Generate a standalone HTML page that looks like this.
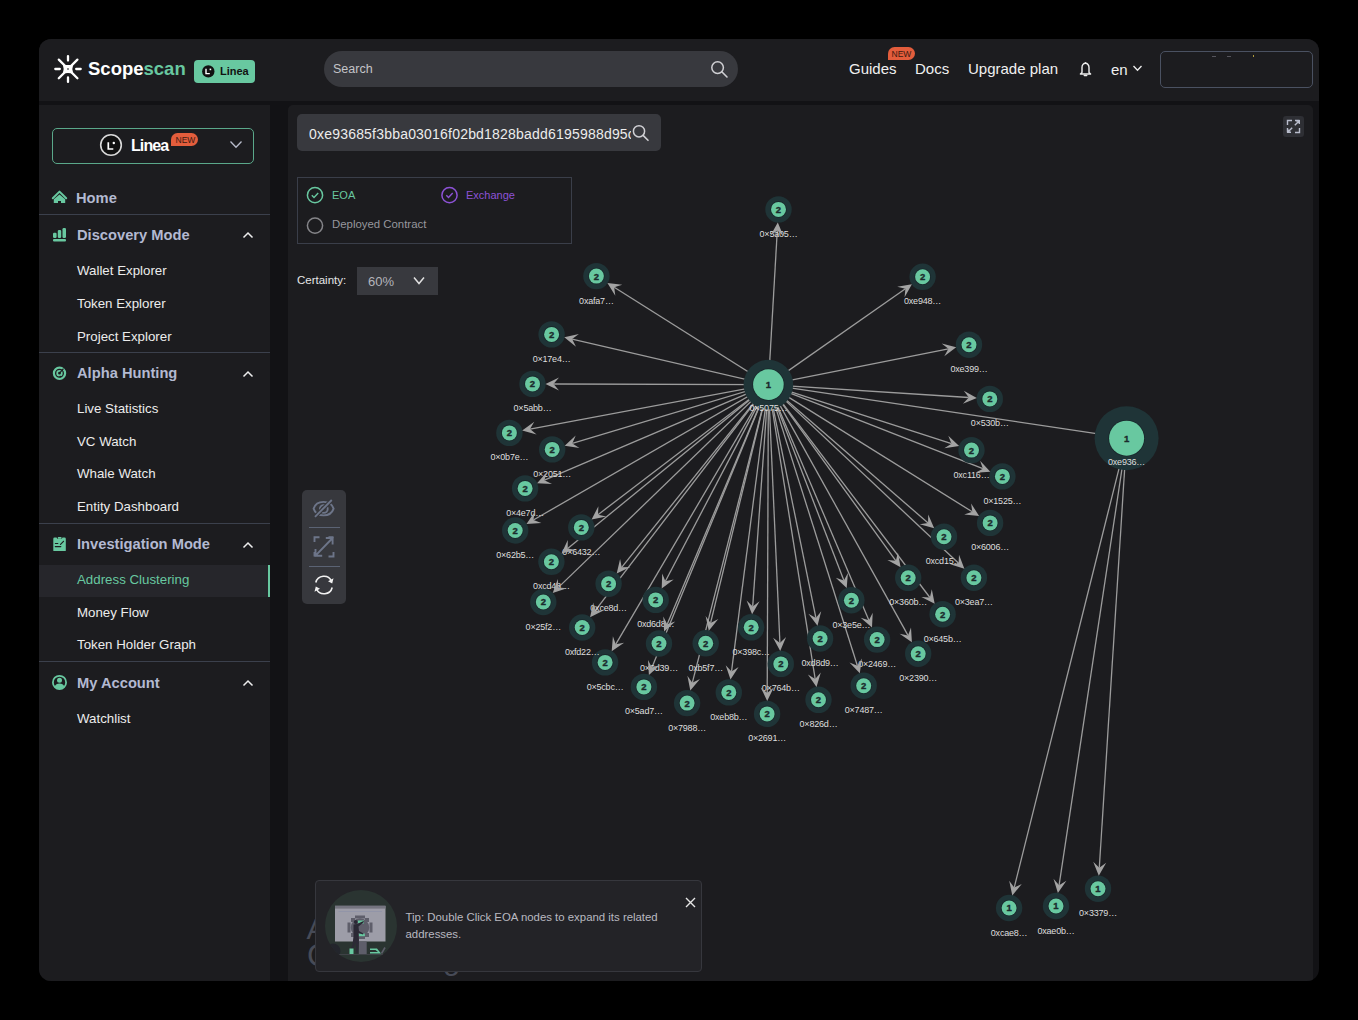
<!DOCTYPE html>
<html><head><meta charset="utf-8">
<style>
*{margin:0;padding:0;box-sizing:border-box}
html,body{width:1358px;height:1020px;overflow:hidden;background:#000;font-family:"Liberation Sans",sans-serif}
.a{position:absolute}
#win{position:absolute;left:39px;top:39px;width:1280px;height:942px;background:#121215;border-radius:12px;overflow:hidden}
#hdr{position:absolute;left:0;top:0;width:1280px;height:62px;background:#1c1c1f}
#side{position:absolute;left:0;top:66px;width:231px;height:876px;background:#1c1c1f}
#main{position:absolute;left:249px;top:66px;width:1025px;height:876px;background:#1c1c1f;border-radius:5px 5px 0 0}
.t{position:absolute;white-space:nowrap;line-height:1}
.sec{color:#b3b9d1;font-weight:bold;font-size:14.7px}
.item{color:#ececec;font-size:13.3px}
.div{position:absolute;left:0;width:231px;height:1px;background:#3b404c}
.chev{position:absolute}
</style></head><body>
<div id="win">
 <div id="hdr"></div>
 <div id="side"></div>
 <div id="main"></div>
</div>

<!-- HEADER (page coords) -->
<svg class="a" style="left:52px;top:53px" width="32" height="32" viewBox="-16 -16 32 32">
 <g stroke="#fff" stroke-width="2.3" stroke-linecap="round" fill="none">
  <path d="M-9.2,-9.4 L9.4,9.2 M9.4,-9.4 L-9.2,9.2"/>
  <path d="M0,-12.9 V-8.4 M0,8.4 V12.9 M-12.7,0 H-8.2 M8.2,0 H12.7"/>
 </g>
 <path d="M-5.2,-4.6 Q0,-3.2 5.2,-4.6 Q3.4,0 5.2,4.6 Q0,3.2 -5.2,4.6 Q-3.4,0 -5.2,-4.6 Z" fill="#fff"/>
 <rect x="-0.7" y="-0.7" width="1.4" height="1.4" fill="#1c1c1f"/>
</svg>
<div class="t" style="left:88px;top:59.5px;font-size:18.5px;font-weight:bold;color:#fff;letter-spacing:0px">Scope<span style="color:#68c8a0">scan</span></div>
<div class="a" style="left:194px;top:60px;width:61px;height:23px;background:#68c8a0;border-radius:4px"></div>
<svg class="a" style="left:201px;top:64px" width="15" height="15" viewBox="0 0 15 15"><circle cx="7.3" cy="7.4" r="6.2" fill="#111"/><path d="M5,4.8 V9.6 H8.8" stroke="#fff" stroke-width="1.4" fill="none"/><rect x="8.6" y="4.6" width="1.6" height="1.6" fill="#fff"/></svg>
<div class="t" style="left:220px;top:65.7px;font-size:11px;font-weight:bold;color:#111">Linea</div>

<div class="a" style="left:324px;top:51px;width:414px;height:36px;background:#38393e;border-radius:18px"></div>
<div class="t" style="left:333px;top:62.5px;font-size:12.5px;color:#c4c4c8">Search</div>
<svg class="a" style="left:709px;top:59px" width="20" height="20" viewBox="0 0 20 20"><circle cx="8.6" cy="8.6" r="5.8" stroke="#d0d0d4" stroke-width="1.5" fill="none"/><path d="M12.8,12.8 L18,18" stroke="#d0d0d4" stroke-width="1.6" stroke-linecap="round"/></svg>

<div class="t" style="left:849px;top:61px;font-size:15px;color:#f0f0f0">Guides</div>
<div class="a" style="left:888px;top:47px;width:27px;height:13px;background:#e35d3c;border-radius:7px 7px 7px 0"></div>
<div class="t" style="left:891.5px;top:49.5px;font-size:8.5px;color:#3b1a10">NEW</div>
<div class="t" style="left:915px;top:61px;font-size:15px;color:#f0f0f0">Docs</div>
<div class="t" style="left:968px;top:61px;font-size:15px;color:#f0f0f0">Upgrade plan</div>
<svg class="a" style="left:1078px;top:61px" width="15" height="17" viewBox="0 0 15 17"><path d="M4,11.5 V6.5 A3.5,4.2 0 0 1 11,6.5 V11.5 L12.6,13 H2.4 Z" stroke="#eee" stroke-width="1.4" fill="none" stroke-linejoin="round"/><path d="M6.3,14.6 H8.7" stroke="#eee" stroke-width="1.5" stroke-linecap="round"/><path d="M7.5,1.2 V2.4" stroke="#eee" stroke-width="1.3"/></svg>
<div class="t" style="left:1111px;top:62px;font-size:15px;color:#f0f0f0">en</div>
<svg class="a" style="left:1132px;top:64px" width="11" height="9" viewBox="0 0 11 9"><path d="M1.5,2 L5.5,6.3 L9.5,2" stroke="#eee" stroke-width="1.3" fill="none"/></svg>
<div class="a" style="left:1160px;top:51px;width:153px;height:37px;border:1px solid #4a5161;border-radius:5px"></div><div class="a" style="left:1212px;top:56px;width:4px;height:1px;background:#55555c"></div><div class="a" style="left:1227px;top:56px;width:4px;height:1px;background:#55555c"></div><div class="a" style="left:1253px;top:55px;width:1px;height:2px;background:#b09a3a"></div>

<!-- SIDEBAR -->
<div class="a" style="left:52px;top:128px;width:202px;height:36px;border:1.3px solid #5aa88a;border-radius:5px"></div>
<svg class="a" style="left:99px;top:133px" width="24" height="24" viewBox="0 0 24 24"><circle cx="12" cy="12" r="10.3" fill="#111" stroke="#d9d9d9" stroke-width="1.6"/><path d="M9.3,9.3 V16 H14.3" stroke="#fff" stroke-width="1.7" fill="none"/><circle cx="14.8" cy="10" r="1.2" fill="#fff"/></svg>
<div class="t" style="left:131px;top:138px;font-size:16px;font-weight:bold;color:#fff;letter-spacing:-0.9px">Linea</div>
<div class="a" style="left:171px;top:133px;width:27px;height:13px;background:#e35d3c;border-radius:7px 7px 7px 0"></div>
<div class="t" style="left:175.5px;top:135.5px;font-size:8.5px;color:#3b1a10">NEW</div>
<svg class="a" style="left:229px;top:139px" width="14" height="12" viewBox="0 0 14 12"><path d="M1.5,2.5 L7,8.3 L12.5,2.5" stroke="#b8bccb" stroke-width="1.3" fill="none"/></svg>

<svg class="a" style="left:51px;top:189px" width="17" height="17" viewBox="0 0 17 17"><path d="M1.8,9.2 L8.5,2.6 L15.2,9.2" stroke="#68c8a0" stroke-width="2" fill="none" stroke-linejoin="round" stroke-linecap="round"/><path d="M2.8,14 V10.2 L8.5,5.6 L14.2,10.2 V14 H10 V12 H7 V14 Z" fill="#68c8a0"/></svg>
<div class="t sec" style="left:76px;top:191px">Home</div>
<div class="div" style="left:39px;top:214px"></div>

<svg class="a" style="left:51px;top:226px" width="17" height="17" viewBox="0 0 17 17"><rect x="2" y="6.8" width="3.6" height="5.2" rx="1.2" fill="#68c8a0"/><rect x="6.8" y="3.9" width="3.4" height="8.1" rx="1.2" fill="#68c8a0"/><rect x="11.5" y="2" width="3.5" height="10" rx="1.2" fill="#68c8a0"/><rect x="2" y="13" width="13" height="2.4" rx="1" fill="#68c8a0"/></svg>
<div class="t sec" style="left:77px;top:227.5px">Discovery Mode</div>
<svg class="chev" style="left:242px;top:230px" width="12" height="10" viewBox="0 0 12 10"><path d="M1.5,7.5 L6,3 L10.5,7.5" stroke="#eee" stroke-width="1.5" fill="none"/></svg>
<div class="t item" style="left:77px;top:264px">Wallet Explorer</div>
<div class="t item" style="left:77px;top:297px">Token Explorer</div>
<div class="t item" style="left:77px;top:329.5px">Project Explorer</div>
<div class="div" style="left:39px;top:352px"></div>

<svg class="a" style="left:51px;top:365px" width="17" height="17" viewBox="0 0 17 17"><circle cx="8.5" cy="8.2" r="5.6" stroke="#68c8a0" stroke-width="2.2" fill="none"/><circle cx="8.5" cy="8.2" r="2.3" stroke="#68c8a0" stroke-width="1.8" fill="none"/><path d="M8.3,8.3 L12.5,3.6" stroke="#1c1c1f" stroke-width="1.2"/><circle cx="9.2" cy="11.6" r="0.9" fill="#1c1c1f"/></svg>
<div class="t sec" style="left:77px;top:366px">Alpha Hunting</div>
<svg class="chev" style="left:242px;top:369px" width="12" height="10" viewBox="0 0 12 10"><path d="M1.5,7.5 L6,3 L10.5,7.5" stroke="#eee" stroke-width="1.5" fill="none"/></svg>
<div class="t item" style="left:77px;top:402px">Live Statistics</div>
<div class="t item" style="left:77px;top:434.5px">VC Watch</div>
<div class="t item" style="left:77px;top:467px">Whale Watch</div>
<div class="t item" style="left:77px;top:499.5px">Entity Dashboard</div>
<div class="div" style="left:39px;top:523px"></div>

<svg class="a" style="left:51px;top:535px" width="17" height="17" viewBox="0 0 17 17"><path d="M2.3,3.8 Q2.3,2.5 3.6,2.5 H5.6 L6.3,3.8 H10.8 L11.5,2.5 H13.5 Q14.8,2.5 14.8,3.8 V15.5 Q14.8,16 14.3,16 H2.8 Q2.3,16 2.3,15.5 Z" fill="#68c8a0"/><rect x="6.8" y="1.9" width="3.7" height="1.8" rx="0.5" fill="#68c8a0"/><path d="M4.4,8.5 H6.8 M4.3,11.6 H9.8" stroke="#1c1c1f" stroke-width="1.2" stroke-linecap="round"/><path d="M9.5,9.4 L12.5,6.3" stroke="#1c1c1f" stroke-width="1.2" stroke-linecap="round"/></svg>
<div class="t sec" style="left:77px;top:537px">Investigation Mode</div>
<svg class="chev" style="left:242px;top:540px" width="12" height="10" viewBox="0 0 12 10"><path d="M1.5,7.5 L6,3 L10.5,7.5" stroke="#eee" stroke-width="1.5" fill="none"/></svg>
<div class="a" style="left:39px;top:565px;width:231px;height:32px;background:#26262b"></div>
<div class="a" style="left:268px;top:565px;width:2px;height:32px;background:#68c8a0"></div>
<div class="t item" style="left:77px;top:573px;color:#68c8a0">Address Clustering</div>
<div class="t item" style="left:77px;top:605.5px">Money Flow</div>
<div class="t item" style="left:77px;top:638px">Token Holder Graph</div>
<div class="div" style="left:39px;top:661px"></div>

<svg class="a" style="left:51px;top:674px" width="17" height="17" viewBox="0 0 17 17"><circle cx="8.5" cy="8.4" r="6.6" stroke="#68c8a0" stroke-width="1.8" fill="none"/><circle cx="8.5" cy="6.3" r="2.5" fill="#68c8a0"/><path d="M3.6,12.6 Q5,9.5 8.5,9.5 Q12,9.5 13.4,12.6 Q11.5,15 8.5,15 Q5.5,15 3.6,12.6 Z" fill="#68c8a0"/></svg>
<div class="t sec" style="left:77px;top:676px">My Account</div>
<svg class="chev" style="left:242px;top:678px" width="12" height="10" viewBox="0 0 12 10"><path d="M1.5,7.5 L6,3 L10.5,7.5" stroke="#eee" stroke-width="1.5" fill="none"/></svg>
<div class="t item" style="left:77px;top:712px">Watchlist</div>


<!-- MAIN -->
<div class="a" style="left:297px;top:114px;width:364px;height:37px;background:#38393e;border-radius:5px"></div>
<div class="t" style="left:309px;top:126.5px;font-size:14px;color:#ececec;width:322px;overflow:hidden;letter-spacing:0.2px">0xe93685f3bba03016f02bd1828badd6195988d95c0</div>
<svg class="a" style="left:631px;top:123px" width="20" height="20" viewBox="0 0 20 20"><circle cx="8" cy="8.3" r="5.6" stroke="#d0d0d4" stroke-width="1.5" fill="none"/><path d="M12.1,12.4 L17,17.3" stroke="#d0d0d4" stroke-width="1.6" stroke-linecap="round"/></svg>
<div class="a" style="left:297px;top:177px;width:275px;height:67px;border:1px solid #3a3e49"></div>
<svg class="a" style="left:305px;top:185px" width="20" height="20" viewBox="0 0 20 20"><circle cx="10" cy="10.2" r="7.6" stroke="#68c8a0" stroke-width="1.5" fill="none"/><path d="M6.8,10.3 L9,12.5 L13.2,8" stroke="#68c8a0" stroke-width="1.4" fill="none"/></svg>
<div class="t" style="left:332px;top:189.5px;font-size:11px;color:#68c8a0">EOA</div>
<svg class="a" style="left:440px;top:185px" width="20" height="20" viewBox="0 0 20 20"><circle cx="9.5" cy="10.2" r="7.6" stroke="#8d52d6" stroke-width="1.5" fill="none"/><path d="M6.3,10.3 L8.5,12.5 L12.7,8" stroke="#8d52d6" stroke-width="1.4" fill="none"/></svg>
<div class="t" style="left:466px;top:189.5px;font-size:11px;color:#8d52d6">Exchange</div>
<svg class="a" style="left:305px;top:215px" width="20" height="20" viewBox="0 0 20 20"><circle cx="10" cy="10.6" r="7.6" stroke="#858589" stroke-width="1.5" fill="none"/></svg>
<div class="t" style="left:332px;top:219.3px;font-size:11.4px;color:#97979d">Deployed Contract</div>
<div class="t" style="left:297px;top:274.5px;font-size:11.5px;color:#e6e6e6">Certainty:</div>
<div class="a" style="left:357px;top:267px;width:81px;height:28px;background:#38393e"></div>
<div class="t" style="left:368px;top:275px;font-size:13px;color:#b4b4bb">60%</div>
<svg class="a" style="left:412px;top:275px" width="14" height="12" viewBox="0 0 14 12"><path d="M2,2.5 L7,8.5 L12,2.5" stroke="#e0e0e0" stroke-width="1.5" fill="none"/></svg>
<div class="a" style="left:1283px;top:116px;width:21px;height:21px;background:#2e2f34;border-radius:3px"></div>
<svg class="a" style="left:1283px;top:116px" width="21" height="21" viewBox="0 0 21 21"><g stroke="#b8bccb" stroke-width="1.4" fill="none"><path d="M4.5,9 V4.5 H9 M16.5,12 V16.5 H12 M4.5,12 V16.5 M12,4.5 H16.5"/><path d="M11.8,9.2 L16.3,4.7 M13,4.7 H16.3 V8 M9.2,11.8 L4.7,16.3 M4.7,13 V16.3 H8"/></g></svg>
<!--GRAPH--><svg class="a" style="left:0;top:0" width="1358" height="1020" viewBox="0 0 1358 1020"><g stroke="#9c9c9c" stroke-width="1.3"><line x1="768.4" y1="384.6" x2="777.3" y2="230.4"/><line x1="768.4" y1="384.6" x2="614.2" y2="287.3"/><line x1="768.4" y1="384.6" x2="905.4" y2="288.8"/><line x1="768.4" y1="384.6" x2="572.1" y2="339.1"/><line x1="768.4" y1="384.6" x2="948.4" y2="348.8"/><line x1="768.4" y1="384.6" x2="553.5" y2="384.0"/><line x1="768.4" y1="384.6" x2="968.8" y2="397.5"/><line x1="768.4" y1="384.6" x2="530.0" y2="429.1"/><line x1="768.4" y1="384.6" x2="572.3" y2="443.4"/><line x1="768.4" y1="384.6" x2="951.5" y2="443.7"/><line x1="768.4" y1="384.6" x2="982.9" y2="468.7"/><line x1="768.4" y1="384.6" x2="544.4" y2="480.2"/><line x1="768.4" y1="384.6" x2="533.4" y2="520.0"/><line x1="768.4" y1="384.6" x2="598.0" y2="514.7"/><line x1="768.4" y1="384.6" x2="972.3" y2="511.8"/><line x1="768.4" y1="384.6" x2="928.1" y2="523.0"/><line x1="768.4" y1="384.6" x2="567.7" y2="548.5"/><line x1="768.4" y1="384.6" x2="621.7" y2="567.3"/><line x1="768.4" y1="384.6" x2="895.9" y2="560.8"/><line x1="768.4" y1="384.6" x2="958.6" y2="563.3"/><line x1="768.4" y1="384.6" x2="558.4" y2="587.4"/><line x1="768.4" y1="384.6" x2="665.4" y2="581.3"/><line x1="768.4" y1="384.6" x2="843.9" y2="580.6"/><line x1="768.4" y1="384.6" x2="929.9" y2="597.5"/><line x1="768.4" y1="384.6" x2="595.0" y2="610.8"/><line x1="768.4" y1="384.6" x2="752.7" y2="606.4"/><line x1="768.4" y1="384.6" x2="667.2" y2="624.2"/><line x1="768.4" y1="384.6" x2="710.6" y2="622.9"/><line x1="768.4" y1="384.6" x2="815.9" y2="617.9"/><line x1="768.4" y1="384.6" x2="868.9" y2="620.3"/><line x1="768.4" y1="384.6" x2="908.0" y2="635.4"/><line x1="768.4" y1="384.6" x2="615.7" y2="644.3"/><line x1="768.4" y1="384.6" x2="779.9" y2="642.9"/><line x1="768.4" y1="384.6" x2="651.9" y2="667.5"/><line x1="768.4" y1="384.6" x2="857.4" y2="665.7"/><line x1="768.4" y1="384.6" x2="731.5" y2="671.6"/><line x1="768.4" y1="384.6" x2="692.3" y2="682.8"/><line x1="768.4" y1="384.6" x2="815.2" y2="679.1"/><line x1="768.4" y1="384.6" x2="767.2" y2="692.9"/><line x1="1126.6" y1="438.2" x2="1014.2" y2="887.6"/><line x1="1126.6" y1="438.2" x2="1059.1" y2="885.2"/><line x1="1126.6" y1="438.2" x2="1099.3" y2="867.7"/><line x1="768.4" y1="384.6" x2="1126.6" y2="438.2"/></g><g><circle cx="768.4" cy="384.6" r="24.8" fill="#1f3437"/><circle cx="768.4" cy="384.6" r="16.1" fill="#18282b"/><circle cx="768.4" cy="384.6" r="15.3" fill="#68c8a0"/><text x="768.4" y="388.0" font-size="9.5" font-weight="bold" fill="#1b2b2d" stroke="#1b2b2d" stroke-width="0.35" text-anchor="middle">1</text><circle cx="1126.6" cy="438.2" r="32" fill="#1f3437"/><circle cx="1126.6" cy="438.2" r="18.3" fill="#18282b"/><circle cx="1126.6" cy="438.2" r="17.5" fill="#68c8a0"/><text x="1126.6" y="441.6" font-size="9.5" font-weight="bold" fill="#1b2b2d" stroke="#1b2b2d" stroke-width="0.35" text-anchor="middle">1</text><circle cx="778.5" cy="209.4" r="13.2" fill="#1f3437"/><circle cx="778.5" cy="209.4" r="8.3" fill="#18282b"/><circle cx="778.5" cy="209.4" r="7.5" fill="#68c8a0"/><text x="778.5" y="212.8" font-size="9.5" font-weight="bold" fill="#1b2b2d" stroke="#1b2b2d" stroke-width="0.35" text-anchor="middle">2</text><circle cx="596.4" cy="276.1" r="13.2" fill="#1f3437"/><circle cx="596.4" cy="276.1" r="8.3" fill="#18282b"/><circle cx="596.4" cy="276.1" r="7.5" fill="#68c8a0"/><text x="596.4" y="279.5" font-size="9.5" font-weight="bold" fill="#1b2b2d" stroke="#1b2b2d" stroke-width="0.35" text-anchor="middle">2</text><circle cx="922.6" cy="276.8" r="13.2" fill="#1f3437"/><circle cx="922.6" cy="276.8" r="8.3" fill="#18282b"/><circle cx="922.6" cy="276.8" r="7.5" fill="#68c8a0"/><text x="922.6" y="280.2" font-size="9.5" font-weight="bold" fill="#1b2b2d" stroke="#1b2b2d" stroke-width="0.35" text-anchor="middle">2</text><circle cx="551.6" cy="334.4" r="13.2" fill="#1f3437"/><circle cx="551.6" cy="334.4" r="8.3" fill="#18282b"/><circle cx="551.6" cy="334.4" r="7.5" fill="#68c8a0"/><text x="551.6" y="337.8" font-size="9.5" font-weight="bold" fill="#1b2b2d" stroke="#1b2b2d" stroke-width="0.35" text-anchor="middle">2</text><circle cx="969" cy="344.7" r="13.2" fill="#1f3437"/><circle cx="969" cy="344.7" r="8.3" fill="#18282b"/><circle cx="969" cy="344.7" r="7.5" fill="#68c8a0"/><text x="969" y="348.1" font-size="9.5" font-weight="bold" fill="#1b2b2d" stroke="#1b2b2d" stroke-width="0.35" text-anchor="middle">2</text><circle cx="532.5" cy="383.9" r="13.2" fill="#1f3437"/><circle cx="532.5" cy="383.9" r="8.3" fill="#18282b"/><circle cx="532.5" cy="383.9" r="7.5" fill="#68c8a0"/><text x="532.5" y="387.3" font-size="9.5" font-weight="bold" fill="#1b2b2d" stroke="#1b2b2d" stroke-width="0.35" text-anchor="middle">2</text><circle cx="989.8" cy="398.9" r="13.2" fill="#1f3437"/><circle cx="989.8" cy="398.9" r="8.3" fill="#18282b"/><circle cx="989.8" cy="398.9" r="7.5" fill="#68c8a0"/><text x="989.8" y="402.3" font-size="9.5" font-weight="bold" fill="#1b2b2d" stroke="#1b2b2d" stroke-width="0.35" text-anchor="middle">2</text><circle cx="509.4" cy="432.9" r="13.2" fill="#1f3437"/><circle cx="509.4" cy="432.9" r="8.3" fill="#18282b"/><circle cx="509.4" cy="432.9" r="7.5" fill="#68c8a0"/><text x="509.4" y="436.3" font-size="9.5" font-weight="bold" fill="#1b2b2d" stroke="#1b2b2d" stroke-width="0.35" text-anchor="middle">2</text><circle cx="552.2" cy="449.4" r="13.2" fill="#1f3437"/><circle cx="552.2" cy="449.4" r="8.3" fill="#18282b"/><circle cx="552.2" cy="449.4" r="7.5" fill="#68c8a0"/><text x="552.2" y="452.8" font-size="9.5" font-weight="bold" fill="#1b2b2d" stroke="#1b2b2d" stroke-width="0.35" text-anchor="middle">2</text><circle cx="971.5" cy="450.1" r="13.2" fill="#1f3437"/><circle cx="971.5" cy="450.1" r="8.3" fill="#18282b"/><circle cx="971.5" cy="450.1" r="7.5" fill="#68c8a0"/><text x="971.5" y="453.5" font-size="9.5" font-weight="bold" fill="#1b2b2d" stroke="#1b2b2d" stroke-width="0.35" text-anchor="middle">2</text><circle cx="1002.4" cy="476.4" r="13.2" fill="#1f3437"/><circle cx="1002.4" cy="476.4" r="8.3" fill="#18282b"/><circle cx="1002.4" cy="476.4" r="7.5" fill="#68c8a0"/><text x="1002.4" y="479.8" font-size="9.5" font-weight="bold" fill="#1b2b2d" stroke="#1b2b2d" stroke-width="0.35" text-anchor="middle">2</text><circle cx="525.1" cy="488.4" r="13.2" fill="#1f3437"/><circle cx="525.1" cy="488.4" r="8.3" fill="#18282b"/><circle cx="525.1" cy="488.4" r="7.5" fill="#68c8a0"/><text x="525.1" y="491.8" font-size="9.5" font-weight="bold" fill="#1b2b2d" stroke="#1b2b2d" stroke-width="0.35" text-anchor="middle">2</text><circle cx="515.2" cy="530.5" r="13.2" fill="#1f3437"/><circle cx="515.2" cy="530.5" r="8.3" fill="#18282b"/><circle cx="515.2" cy="530.5" r="7.5" fill="#68c8a0"/><text x="515.2" y="533.9" font-size="9.5" font-weight="bold" fill="#1b2b2d" stroke="#1b2b2d" stroke-width="0.35" text-anchor="middle">2</text><circle cx="581.3" cy="527.4" r="13.2" fill="#1f3437"/><circle cx="581.3" cy="527.4" r="8.3" fill="#18282b"/><circle cx="581.3" cy="527.4" r="7.5" fill="#68c8a0"/><text x="581.3" y="530.8" font-size="9.5" font-weight="bold" fill="#1b2b2d" stroke="#1b2b2d" stroke-width="0.35" text-anchor="middle">2</text><circle cx="990.1" cy="522.9" r="13.2" fill="#1f3437"/><circle cx="990.1" cy="522.9" r="8.3" fill="#18282b"/><circle cx="990.1" cy="522.9" r="7.5" fill="#68c8a0"/><text x="990.1" y="526.3" font-size="9.5" font-weight="bold" fill="#1b2b2d" stroke="#1b2b2d" stroke-width="0.35" text-anchor="middle">2</text><circle cx="944" cy="536.7" r="13.2" fill="#1f3437"/><circle cx="944" cy="536.7" r="8.3" fill="#18282b"/><circle cx="944" cy="536.7" r="7.5" fill="#68c8a0"/><text x="944" y="540.1" font-size="9.5" font-weight="bold" fill="#1b2b2d" stroke="#1b2b2d" stroke-width="0.35" text-anchor="middle">2</text><circle cx="551.4" cy="561.8" r="13.2" fill="#1f3437"/><circle cx="551.4" cy="561.8" r="8.3" fill="#18282b"/><circle cx="551.4" cy="561.8" r="7.5" fill="#68c8a0"/><text x="551.4" y="565.2" font-size="9.5" font-weight="bold" fill="#1b2b2d" stroke="#1b2b2d" stroke-width="0.35" text-anchor="middle">2</text><circle cx="608.6" cy="583.7" r="13.2" fill="#1f3437"/><circle cx="608.6" cy="583.7" r="8.3" fill="#18282b"/><circle cx="608.6" cy="583.7" r="7.5" fill="#68c8a0"/><text x="608.6" y="587.1" font-size="9.5" font-weight="bold" fill="#1b2b2d" stroke="#1b2b2d" stroke-width="0.35" text-anchor="middle">2</text><circle cx="908.2" cy="577.8" r="13.2" fill="#1f3437"/><circle cx="908.2" cy="577.8" r="8.3" fill="#18282b"/><circle cx="908.2" cy="577.8" r="7.5" fill="#68c8a0"/><text x="908.2" y="581.2" font-size="9.5" font-weight="bold" fill="#1b2b2d" stroke="#1b2b2d" stroke-width="0.35" text-anchor="middle">2</text><circle cx="973.9" cy="577.7" r="13.2" fill="#1f3437"/><circle cx="973.9" cy="577.7" r="8.3" fill="#18282b"/><circle cx="973.9" cy="577.7" r="7.5" fill="#68c8a0"/><text x="973.9" y="581.1" font-size="9.5" font-weight="bold" fill="#1b2b2d" stroke="#1b2b2d" stroke-width="0.35" text-anchor="middle">2</text><circle cx="543.3" cy="602" r="13.2" fill="#1f3437"/><circle cx="543.3" cy="602" r="8.3" fill="#18282b"/><circle cx="543.3" cy="602" r="7.5" fill="#68c8a0"/><text x="543.3" y="605.4" font-size="9.5" font-weight="bold" fill="#1b2b2d" stroke="#1b2b2d" stroke-width="0.35" text-anchor="middle">2</text><circle cx="655.7" cy="599.9" r="13.2" fill="#1f3437"/><circle cx="655.7" cy="599.9" r="8.3" fill="#18282b"/><circle cx="655.7" cy="599.9" r="7.5" fill="#68c8a0"/><text x="655.7" y="603.3" font-size="9.5" font-weight="bold" fill="#1b2b2d" stroke="#1b2b2d" stroke-width="0.35" text-anchor="middle">2</text><circle cx="851.4" cy="600.2" r="13.2" fill="#1f3437"/><circle cx="851.4" cy="600.2" r="8.3" fill="#18282b"/><circle cx="851.4" cy="600.2" r="7.5" fill="#68c8a0"/><text x="851.4" y="603.6" font-size="9.5" font-weight="bold" fill="#1b2b2d" stroke="#1b2b2d" stroke-width="0.35" text-anchor="middle">2</text><circle cx="942.6" cy="614.2" r="13.2" fill="#1f3437"/><circle cx="942.6" cy="614.2" r="8.3" fill="#18282b"/><circle cx="942.6" cy="614.2" r="7.5" fill="#68c8a0"/><text x="942.6" y="617.6" font-size="9.5" font-weight="bold" fill="#1b2b2d" stroke="#1b2b2d" stroke-width="0.35" text-anchor="middle">2</text><circle cx="582.2" cy="627.5" r="13.2" fill="#1f3437"/><circle cx="582.2" cy="627.5" r="8.3" fill="#18282b"/><circle cx="582.2" cy="627.5" r="7.5" fill="#68c8a0"/><text x="582.2" y="630.9" font-size="9.5" font-weight="bold" fill="#1b2b2d" stroke="#1b2b2d" stroke-width="0.35" text-anchor="middle">2</text><circle cx="751.2" cy="627.3" r="13.2" fill="#1f3437"/><circle cx="751.2" cy="627.3" r="8.3" fill="#18282b"/><circle cx="751.2" cy="627.3" r="7.5" fill="#68c8a0"/><text x="751.2" y="630.7" font-size="9.5" font-weight="bold" fill="#1b2b2d" stroke="#1b2b2d" stroke-width="0.35" text-anchor="middle">2</text><circle cx="659" cy="643.5" r="13.2" fill="#1f3437"/><circle cx="659" cy="643.5" r="8.3" fill="#18282b"/><circle cx="659" cy="643.5" r="7.5" fill="#68c8a0"/><text x="659" y="646.9" font-size="9.5" font-weight="bold" fill="#1b2b2d" stroke="#1b2b2d" stroke-width="0.35" text-anchor="middle">2</text><circle cx="705.7" cy="643.3" r="13.2" fill="#1f3437"/><circle cx="705.7" cy="643.3" r="8.3" fill="#18282b"/><circle cx="705.7" cy="643.3" r="7.5" fill="#68c8a0"/><text x="705.7" y="646.7" font-size="9.5" font-weight="bold" fill="#1b2b2d" stroke="#1b2b2d" stroke-width="0.35" text-anchor="middle">2</text><circle cx="820.1" cy="638.5" r="13.2" fill="#1f3437"/><circle cx="820.1" cy="638.5" r="8.3" fill="#18282b"/><circle cx="820.1" cy="638.5" r="7.5" fill="#68c8a0"/><text x="820.1" y="641.9" font-size="9.5" font-weight="bold" fill="#1b2b2d" stroke="#1b2b2d" stroke-width="0.35" text-anchor="middle">2</text><circle cx="877.1" cy="639.6" r="13.2" fill="#1f3437"/><circle cx="877.1" cy="639.6" r="8.3" fill="#18282b"/><circle cx="877.1" cy="639.6" r="7.5" fill="#68c8a0"/><text x="877.1" y="643.0" font-size="9.5" font-weight="bold" fill="#1b2b2d" stroke="#1b2b2d" stroke-width="0.35" text-anchor="middle">2</text><circle cx="918.2" cy="653.7" r="13.2" fill="#1f3437"/><circle cx="918.2" cy="653.7" r="8.3" fill="#18282b"/><circle cx="918.2" cy="653.7" r="7.5" fill="#68c8a0"/><text x="918.2" y="657.1" font-size="9.5" font-weight="bold" fill="#1b2b2d" stroke="#1b2b2d" stroke-width="0.35" text-anchor="middle">2</text><circle cx="605.1" cy="662.4" r="13.2" fill="#1f3437"/><circle cx="605.1" cy="662.4" r="8.3" fill="#18282b"/><circle cx="605.1" cy="662.4" r="7.5" fill="#68c8a0"/><text x="605.1" y="665.8" font-size="9.5" font-weight="bold" fill="#1b2b2d" stroke="#1b2b2d" stroke-width="0.35" text-anchor="middle">2</text><circle cx="780.8" cy="663.9" r="13.2" fill="#1f3437"/><circle cx="780.8" cy="663.9" r="8.3" fill="#18282b"/><circle cx="780.8" cy="663.9" r="7.5" fill="#68c8a0"/><text x="780.8" y="667.3" font-size="9.5" font-weight="bold" fill="#1b2b2d" stroke="#1b2b2d" stroke-width="0.35" text-anchor="middle">2</text><circle cx="643.9" cy="686.9" r="13.2" fill="#1f3437"/><circle cx="643.9" cy="686.9" r="8.3" fill="#18282b"/><circle cx="643.9" cy="686.9" r="7.5" fill="#68c8a0"/><text x="643.9" y="690.3" font-size="9.5" font-weight="bold" fill="#1b2b2d" stroke="#1b2b2d" stroke-width="0.35" text-anchor="middle">2</text><circle cx="863.7" cy="685.7" r="13.2" fill="#1f3437"/><circle cx="863.7" cy="685.7" r="8.3" fill="#18282b"/><circle cx="863.7" cy="685.7" r="7.5" fill="#68c8a0"/><text x="863.7" y="689.1" font-size="9.5" font-weight="bold" fill="#1b2b2d" stroke="#1b2b2d" stroke-width="0.35" text-anchor="middle">2</text><circle cx="728.8" cy="692.4" r="13.2" fill="#1f3437"/><circle cx="728.8" cy="692.4" r="8.3" fill="#18282b"/><circle cx="728.8" cy="692.4" r="7.5" fill="#68c8a0"/><text x="728.8" y="695.8" font-size="9.5" font-weight="bold" fill="#1b2b2d" stroke="#1b2b2d" stroke-width="0.35" text-anchor="middle">2</text><circle cx="687.1" cy="703.1" r="13.2" fill="#1f3437"/><circle cx="687.1" cy="703.1" r="8.3" fill="#18282b"/><circle cx="687.1" cy="703.1" r="7.5" fill="#68c8a0"/><text x="687.1" y="706.5" font-size="9.5" font-weight="bold" fill="#1b2b2d" stroke="#1b2b2d" stroke-width="0.35" text-anchor="middle">2</text><circle cx="818.5" cy="699.8" r="13.2" fill="#1f3437"/><circle cx="818.5" cy="699.8" r="8.3" fill="#18282b"/><circle cx="818.5" cy="699.8" r="7.5" fill="#68c8a0"/><text x="818.5" y="703.2" font-size="9.5" font-weight="bold" fill="#1b2b2d" stroke="#1b2b2d" stroke-width="0.35" text-anchor="middle">2</text><circle cx="767.1" cy="713.9" r="13.2" fill="#1f3437"/><circle cx="767.1" cy="713.9" r="8.3" fill="#18282b"/><circle cx="767.1" cy="713.9" r="7.5" fill="#68c8a0"/><text x="767.1" y="717.3" font-size="9.5" font-weight="bold" fill="#1b2b2d" stroke="#1b2b2d" stroke-width="0.35" text-anchor="middle">2</text><circle cx="1009.1" cy="908" r="13.2" fill="#1f3437"/><circle cx="1009.1" cy="908" r="8.3" fill="#18282b"/><circle cx="1009.1" cy="908" r="7.5" fill="#68c8a0"/><text x="1009.1" y="911.4" font-size="9.5" font-weight="bold" fill="#1b2b2d" stroke="#1b2b2d" stroke-width="0.35" text-anchor="middle">1</text><circle cx="1056" cy="906" r="13.2" fill="#1f3437"/><circle cx="1056" cy="906" r="8.3" fill="#18282b"/><circle cx="1056" cy="906" r="7.5" fill="#68c8a0"/><text x="1056" y="909.4" font-size="9.5" font-weight="bold" fill="#1b2b2d" stroke="#1b2b2d" stroke-width="0.35" text-anchor="middle">1</text><circle cx="1098" cy="888.7" r="13.2" fill="#1f3437"/><circle cx="1098" cy="888.7" r="8.3" fill="#18282b"/><circle cx="1098" cy="888.7" r="7.5" fill="#68c8a0"/><text x="1098" y="892.1" font-size="9.5" font-weight="bold" fill="#1b2b2d" stroke="#1b2b2d" stroke-width="0.35" text-anchor="middle">1</text></g><g font-size="9" fill="#dedede" text-anchor="middle" letter-spacing="-0.2"><text x="768.4" y="410.6">0×5075…</text><text x="1126.6" y="464.7">0xe936…</text><text x="778.5" y="236.9">0×5a05…</text><text x="596.4" y="303.6">0xafa7…</text><text x="922.6" y="304.3">0xe948…</text><text x="551.6" y="361.9">0×17e4…</text><text x="969" y="372.2">0xe399…</text><text x="532.5" y="411.4">0×5abb…</text><text x="989.8" y="426.4">0×530b…</text><text x="509.4" y="460.4">0×0b7e…</text><text x="552.2" y="476.9">0×2051…</text><text x="971.5" y="477.6">0xc116…</text><text x="1002.4" y="503.9">0×1525…</text><text x="525.1" y="515.9">0×4e7d…</text><text x="515.2" y="558.0">0×62b5…</text><text x="581.3" y="554.9">0×6432…</text><text x="990.1" y="550.4">0×6006…</text><text x="944" y="564.2">0xcd15…</text><text x="551.4" y="589.3">0xcd48…</text><text x="608.6" y="611.2">0xce8d…</text><text x="908.2" y="605.3">0×360b…</text><text x="973.9" y="605.2">0×3ea7…</text><text x="543.3" y="629.5">0×25f2…</text><text x="655.7" y="627.4">0xd6d8…</text><text x="851.4" y="627.7">0×3e5e…</text><text x="942.6" y="641.7">0×645b…</text><text x="582.2" y="655.0">0xfd22…</text><text x="751.2" y="654.8">0×398c…</text><text x="659" y="671.0">0×9d39…</text><text x="705.7" y="670.8">0xb5f7…</text><text x="820.1" y="666.0">0xd8d9…</text><text x="877.1" y="667.1">0×2469…</text><text x="918.2" y="681.2">0×2390…</text><text x="605.1" y="689.9">0×5cbc…</text><text x="780.8" y="691.4">0×764b…</text><text x="643.9" y="714.4">0×5ad7…</text><text x="863.7" y="713.2">0×7487…</text><text x="728.8" y="719.9">0xeb8b…</text><text x="687.1" y="730.6">0×7988…</text><text x="818.5" y="727.3">0×826d…</text><text x="767.1" y="741.4">0×2691…</text><text x="1009.1" y="935.5">0xcae8…</text><text x="1056" y="933.5">0xae0b…</text><text x="1098" y="916.2">0×3379…</text></g><g fill="#a3a3a3"><path d="M777.8,222.4 L783.5,236.2 L777.3,230.4 L770.5,235.5 Z"/><path d="M607.4,283.0 L622.3,284.7 L614.2,287.3 L615.3,295.7 Z"/><path d="M911.9,284.2 L904.6,297.3 L905.4,288.8 L897.2,286.7 Z"/><path d="M564.3,337.3 L578.9,334.0 L572.1,339.1 L576.0,346.7 Z"/><path d="M956.2,347.2 L944.3,356.2 L948.4,348.8 L941.7,343.5 Z"/><path d="M545.5,383.9 L559.0,377.5 L553.5,384.0 L559.0,390.5 Z"/><path d="M976.8,398.1 L962.9,403.7 L968.8,397.5 L963.8,390.7 Z"/><path d="M522.2,430.5 L534.3,421.7 L530.0,429.1 L536.6,434.4 Z"/><path d="M564.7,445.7 L575.7,435.6 L572.3,443.4 L579.5,448.0 Z"/><path d="M959.1,446.1 L944.3,448.2 L951.5,443.7 L948.3,435.8 Z"/><path d="M990.3,471.7 L975.4,472.8 L982.9,468.7 L980.1,460.7 Z"/><path d="M537.1,483.3 L546.9,472.0 L544.4,480.2 L552.0,484.0 Z"/><path d="M526.5,524.0 L534.9,511.6 L533.4,520.0 L541.4,522.9 Z"/><path d="M591.6,519.5 L598.4,506.2 L598.0,514.7 L606.3,516.5 Z"/><path d="M979.1,516.0 L964.2,514.4 L972.3,511.8 L971.1,503.4 Z"/><path d="M934.2,528.2 L919.7,524.3 L928.1,523.0 L928.2,514.4 Z"/><path d="M561.5,553.6 L567.8,540.0 L567.7,548.5 L576.0,550.1 Z"/><path d="M616.7,573.6 L620.1,559.0 L621.7,567.3 L630.3,567.1 Z"/><path d="M900.6,567.3 L887.4,560.1 L895.9,560.8 L897.9,552.5 Z"/><path d="M964.4,568.8 L950.1,564.3 L958.6,563.3 L959.0,554.8 Z"/><path d="M552.7,593.0 L557.8,578.9 L558.4,587.4 L566.9,588.3 Z"/><path d="M661.7,588.4 L662.2,573.4 L665.4,581.3 L673.7,579.4 Z"/><path d="M846.7,588.1 L835.8,577.8 L843.9,580.6 L847.9,573.1 Z"/><path d="M934.7,603.8 L921.4,597.0 L929.9,597.5 L931.8,589.2 Z"/><path d="M590.1,617.2 L593.2,602.5 L595.0,610.8 L603.5,610.4 Z"/><path d="M752.1,614.3 L746.6,600.4 L752.7,606.4 L759.6,601.3 Z"/><path d="M664.1,631.5 L663.3,616.6 L667.2,624.2 L675.3,621.6 Z"/><path d="M708.8,630.7 L705.6,616.0 L710.6,622.9 L718.3,619.1 Z"/><path d="M817.5,625.8 L808.4,613.8 L815.9,617.9 L821.2,611.2 Z"/><path d="M872.0,627.6 L860.7,617.8 L868.9,620.3 L872.7,612.7 Z"/><path d="M911.9,642.3 L899.6,633.7 L908.0,635.4 L911.0,627.4 Z"/><path d="M611.7,651.2 L612.9,636.3 L615.7,644.3 L624.1,642.8 Z"/><path d="M780.2,650.9 L773.1,637.7 L779.9,642.9 L786.1,637.1 Z"/><path d="M648.9,674.9 L648.0,659.9 L651.9,667.5 L660.0,664.9 Z"/><path d="M859.8,673.3 L849.5,662.4 L857.4,665.7 L861.9,658.5 Z"/><path d="M730.5,679.5 L725.7,665.3 L731.5,671.6 L738.6,666.9 Z"/><path d="M690.3,690.5 L687.4,675.8 L692.3,682.8 L700.0,679.0 Z"/><path d="M816.5,687.0 L807.9,674.6 L815.2,679.1 L820.8,672.6 Z"/><path d="M767.2,700.9 L760.7,687.4 L767.2,692.9 L773.7,687.4 Z"/><path d="M1012.3,895.4 L1009.2,880.7 L1014.2,887.6 L1021.8,883.9 Z"/><path d="M1057.9,893.1 L1053.5,878.8 L1059.1,885.2 L1066.4,880.8 Z"/><path d="M1098.8,875.7 L1093.2,861.8 L1099.3,867.7 L1106.2,862.7 Z"/></g></svg><!--/GRAPH-->
<div class="a" style="left:302px;top:490px;width:44px;height:114px;background:#37383d;border-radius:5px"></div>
<div class="a" style="left:308.5px;top:526.5px;width:31.5px;height:1.5px;background:#5b6374"></div>
<div class="a" style="left:308.5px;top:565.5px;width:31.5px;height:1.5px;background:#5b6374"></div>
<svg class="a" style="left:312px;top:497px" width="24" height="24" viewBox="0 0 24 24"><g stroke="#6d7589" stroke-width="1.9" fill="none"><path d="M1.6,11.6 C4.5,2.6 18.6,2.6 21.6,11.6 C18.6,20.6 4.5,20.6 1.6,11.6 Z"/><circle cx="11.8" cy="12" r="3.9"/><path d="M19.8,3 L3,19.8" stroke="#37383d" stroke-width="4.2"/><path d="M19.8,3 L3,19.8"/></g></svg>
<svg class="a" style="left:312px;top:535px" width="24" height="24" viewBox="0 0 24 24"><g stroke="#6d7589" stroke-width="1.9" fill="none"><path d="M2.5,7 V2.2 H7.5 M21.5,17 V21.5 H16.5 M2.5,17 V21.5 M16.5,2.2 H21.5"/><path d="M20.6,3 L3.5,20.7 M13.8,3 H20.6 V9.6 M3.5,14 V20.7 H10.2"/></g></svg>
<svg class="a" style="left:312px;top:573px" width="24" height="24" viewBox="0 0 24 24"><g stroke="#f2f2f2" stroke-width="1.6" fill="none"><path d="M3.8,9.5 A8.4,8.4 0 0 1 19.5,8"/><path d="M20.2,14.5 A8.4,8.4 0 0 1 4.5,16"/></g><path d="M21.5,5.2 L20.2,10.5 L16,8.2 Z M2.5,18.8 L3.8,13.5 L8,15.8 Z" fill="#f2f2f2"/></svg>
<div class="t" style="left:306.5px;top:914px;font-size:30px;color:#474b57">A</div>
<div class="t" style="left:307px;top:940px;font-size:31.5px;color:#474b57">C</div>
<div class="t" style="left:443px;top:950.5px;font-size:30px;color:#474b57">o</div>
<div class="a" style="left:315px;top:880px;width:387px;height:92px;background:#232327;border:1px solid #36373d;border-radius:4px"></div>
<div class="a" style="left:325px;top:890px;width:72px;height:72px;border-radius:50%;background:#2a3431"></div>
<svg class="a" style="left:325px;top:890px" width="72" height="72" viewBox="0 0 72 72">
 <defs><clipPath id="cc"><circle cx="36" cy="36" r="36"/></clipPath></defs>
 <g clip-path="url(#cc)">
 <circle cx="8" cy="61" r="7.5" fill="#23252c"/>
 <rect x="10" y="15.8" width="50.5" height="35.7" fill="#9d9da8"/>
 <rect x="10" y="15.8" width="50.5" height="2.8" fill="#74747f"/>
 <rect x="13.5" y="21" width="43.5" height="0.6" fill="#8a90a8"/>
 <rect x="33.8" y="51.5" width="7.9" height="12.5" fill="#5e5e6a"/>
 <rect x="9" y="64" width="54" height="0.7" fill="#4a4a52"/>
 <circle cx="35" cy="37.5" r="9.3" fill="#5e5e6a"/>
 <rect x="30" y="25.5" width="10" height="3" fill="#5e5e6a"/><rect x="30" y="46" width="10" height="3" fill="#5e5e6a"/>
 <rect x="22.5" y="32.5" width="3" height="10" fill="#5e5e6a"/><rect x="44.5" y="32.5" width="3" height="10" fill="#5e5e6a"/>
 <rect x="26" y="28" width="4" height="4" fill="#5e5e6a"/><rect x="40" y="28" width="4" height="4" fill="#5e5e6a"/>
 <rect x="26" y="43" width="4" height="4" fill="#5e5e6a"/><rect x="40" y="43" width="4" height="4" fill="#5e5e6a"/>
 <rect x="32.8" y="30.5" width="6.2" height="2.9" fill="#68c8a0"/>
 <rect x="33.8" y="43.5" width="6" height="2.7" fill="#68c8a0"/>
 <circle cx="30.8" cy="32" r="1.9" fill="#2b2935"/>
 <path d="M28.5,34.5 L32,34 L38.5,31 L39,32 L33.5,36.5 L34,41 L38.5,43.5 L38,44.5 L33.5,43 L34,50 L33,63 L31.5,63 L30.5,52 L29,57 L25.5,62 L24.5,61 L27.5,55 L28.5,46 Z" fill="#2b2935"/>
 <rect x="24.5" y="58.5" width="4" height="5.5" fill="#68c8a0"/>
 <path d="M45,58.5 H52 L56,63.5 H45 V62 H53 L50.5,60 H45 Z" fill="#68c8a0"/>
 <path d="M56.5,63.5 L60,57.5" stroke="#5e5e6a" stroke-width="1.6"/>
 </g>
</svg>
<div class="t" style="left:405.5px;top:909px;font-size:11.4px;color:#b9b9c0;line-height:16.5px;white-space:normal;width:290px">Tip: Double Click EOA nodes to expand its related<br>addresses.</div>
<svg class="a" style="left:684px;top:896px" width="13" height="13" viewBox="0 0 13 13"><path d="M2,2 L11,11 M11,2 L2,11" stroke="#e6e6e6" stroke-width="1.4"/></svg>
</body></html>
